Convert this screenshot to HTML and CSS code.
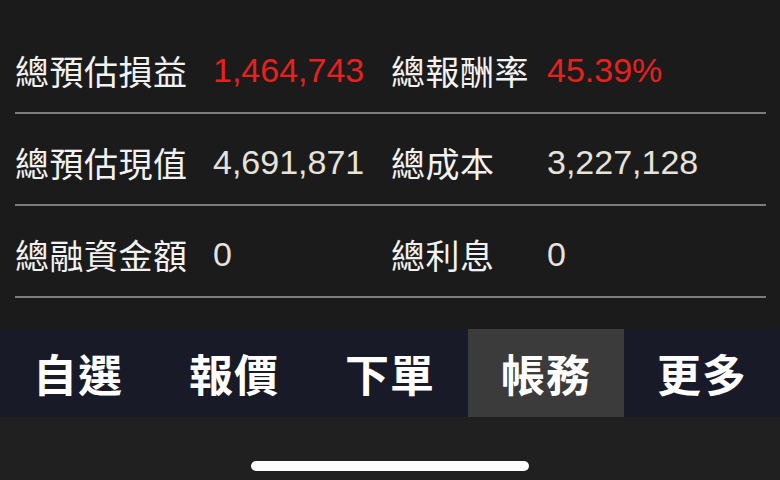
FILE: index.html
```html
<!DOCTYPE html>
<html lang="zh-Hant">
<head>
    <meta charset="UTF-8">
    <meta name="viewport" content="width=device-width, initial-scale=1.0">
    <title>帳務</title>
    <link rel="stylesheet" href="styles.css">
</head>
<body>
    <div class="screen">
        <div class="summary">
            <div class="summary-row">
                <div class="label">總預估損益</div>
                <div class="value up">1,464,743</div>
                <div class="label">總報酬率</div>
                <div class="value up">45.39%</div>
            </div>
            <div class="summary-row">
                <div class="label">總預估現值</div>
                <div class="value">4,691,871</div>
                <div class="label">總成本</div>
                <div class="value">3,227,128</div>
            </div>
            <div class="summary-row">
                <div class="label">總融資金額</div>
                <div class="value">0</div>
                <div class="label">總利息</div>
                <div class="value">0</div>
            </div>
        </div>

        <nav class="tab-bar">
            <div class="tab-item">自選</div>
            <div class="tab-item">報價</div>
            <div class="tab-item">下單</div>
            <div class="tab-item active">帳務</div>
            <div class="tab-item">更多</div>
        </nav>

        <div class="home-area">
            <div class="home-indicator"></div>
        </div>
    </div>
</body>
</html>
```

FILE: styles.css
```css
* {
    margin: 0;
    padding: 0;
    box-sizing: border-box;
}

html, body {
    width: 100%;
    height: 100%;
    overflow: hidden;
}

body {
    background-color: #1b1b1b;
    font-family: 'Liberation Sans', 'Noto Sans CJK TC', sans-serif;
}

.screen {
    display: flex;
    flex-direction: column;
    width: 100%;
    height: 100%;
}

.summary {
    padding-top: 22px;
    height: 329px;
}

.summary-row {
    display: grid;
    grid-template-columns: 198px 178px 156px 1fr;
    align-items: center;
    height: 92px;
    margin: 0 14px 0 15px;
    padding-top: 6px;
    border-bottom: 2px solid #7d7d7d;
}

.label {
    font-family: 'Noto Sans CJK TC', sans-serif;
    font-size: 34px;
    color: #f2f2f2;
    letter-spacing: 0.5px;
    white-space: nowrap;
}

.value {
    font-size: 34px;
    color: #e6e2dc;
    white-space: nowrap;
}

.value.up {
    color: #e8201e;
}

.tab-bar {
    display: grid;
    grid-template-columns: repeat(5, 1fr);
    height: 88px;
    background-color: #181a27;
}

.tab-item {
    display: flex;
    align-items: center;
    justify-content: center;
    font-family: 'Noto Sans CJK TC', sans-serif;
    font-size: 44px;
    font-weight: bold;
    color: #ffffff;
    letter-spacing: 1px;
}

.tab-item.active {
    background-color: #3b3b3b;
}

.home-area {
    flex: 1;
    display: flex;
    justify-content: center;
    padding-top: 44px;
    background-color: #202020;
}

.home-indicator {
    width: 278px;
    height: 10px;
    border-radius: 5px;
    background-color: #ffffff;
}
```
